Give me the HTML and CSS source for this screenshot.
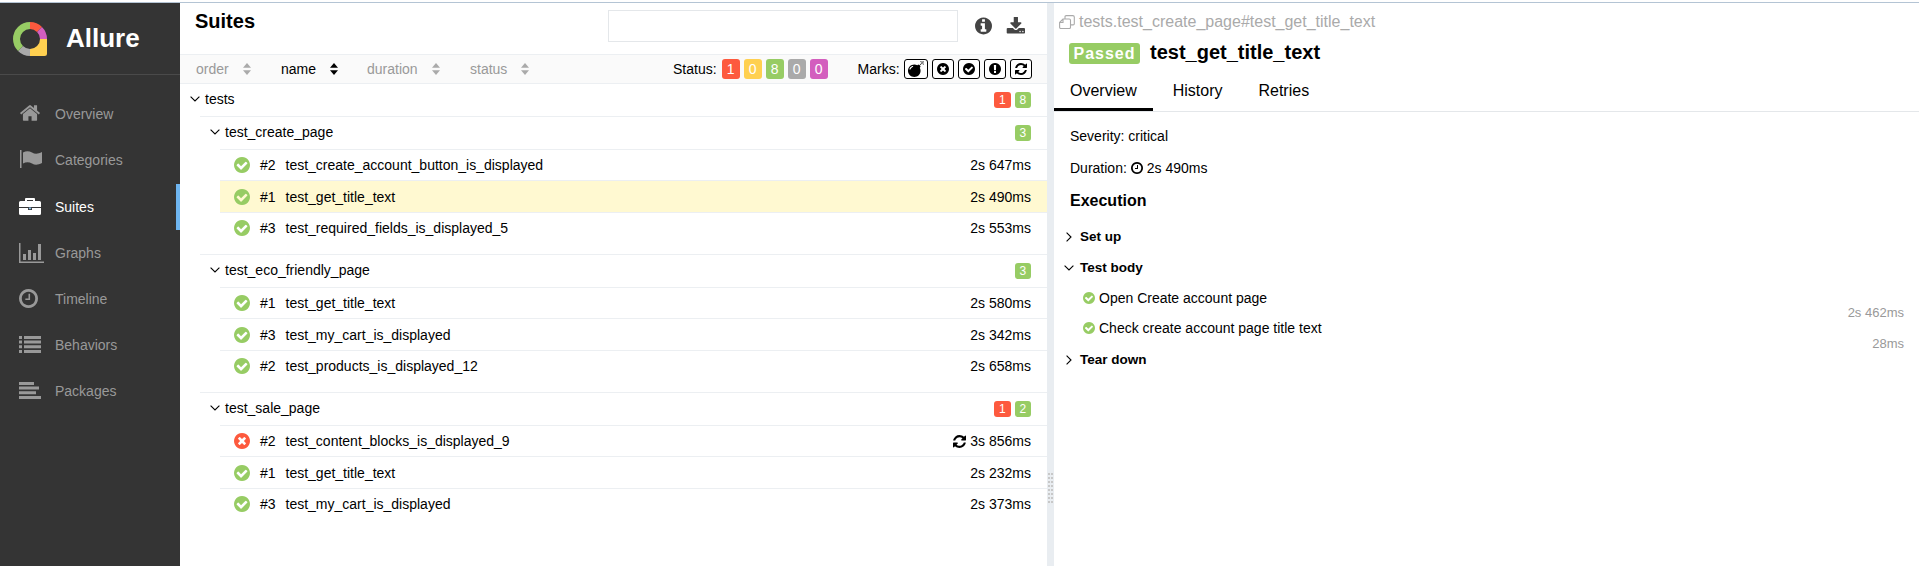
FILE: index.html
```html
<!DOCTYPE html>
<html lang="en">
<head>
  <meta charset="UTF-8" />
  <meta name="viewport" content="width=device-width, initial-scale=1.0" />
  <title>Allure Report</title>
  <link rel="stylesheet" href="styles.css">
</head>
<body>
  <svg class="sprites" aria-hidden="true">
    <symbol id="i-check" viewBox="128 128 1536 1536"><path d="M1412 734q0-28-18-46l-91-90q-19-19-45-19t-45 19l-408 407-226-226q-19-19-45-19t-45 19l-91 90q-18 18-18 46 0 27 18 45l362 362q19 19 45 19 27 0 46-19l543-543q18-18 18-45zm252 162q0 209-103 385.5t-279.5 279.5-385.5 103-385.5-103-279.5-279.5-103-385.5 103-385.5 279.5-279.5 385.5-103 385.5 103 279.5 279.5 103 385.5z"/></symbol>
    <symbol id="i-times" viewBox="128 128 1536 1536"><path d="M1277 1122q0-26-19-45l-181-181 181-181q19-19 19-45 0-27-19-46l-90-90q-19-19-46-19-26 0-45 19l-181 181-181-181q-19-19-45-19-27 0-46 19l-90 90q-19 19-19 46 0 26 19 45l181 181-181 181q-19 19-19 45 0 27 19 46l90 90q19 19 46 19 26 0 45-19l181-181 181 181q19 19 45 19 27 0 46-19l90-90q19-19 19-46zm387-226q0 209-103 385.5t-279.5 279.5-385.5 103-385.5-103-279.5-279.5-103-385.5 103-385.5 279.5-279.5 385.5-103 385.5 103 279.5 279.5 103 385.5z"/></symbol>
    <symbol id="i-info" viewBox="128 128 1536 1536"><path d="M1152 1376v-160q0-14-9-23t-23-9h-96v-512q0-14-9-23t-23-9h-320q-14 0-23 9t-9 23v160q0 14 9 23t23 9h96v320h-96q-14 0-23 9t-9 23v160q0 14 9 23t23 9h448q14 0 23-9t9-23zm-128-896v-160q0-14-9-23t-23-9h-192q-14 0-23 9t-9 23v160q0 14 9 23t23 9h192q14 0 23-9t9-23zm640 416q0 209-103 385.5t-279.5 279.5-385.5 103-385.5-103-279.5-279.5-103-385.5 103-385.5 279.5-279.5 385.5-103 385.5 103 279.5 279.5 103 385.5z"/></symbol>
    <symbol id="i-warn" viewBox="128 128 1536 1536"><path d="M896 128q209 0 385.5 103t279.5 279.5 103 385.5-103 385.5-279.5 279.5-385.5 103-385.5-103-279.5-279.5-103-385.5 103-385.5 279.5-279.5 385.5-103zm128 1247v-190q0-14-9-23.5t-22-9.5h-192q-13 0-23 10t-10 23v190q0 13 10 23t23 10h192q13 0 22-9.5t9-23.5zm-2-344l18-621q0-12-10-18-10-8-24-8h-220q-14 0-24 8-10 6-10 18l17 621q0 10 10 17.5t24 7.5h185q14 0 23.5-7.5t10.5-17.5z"/></symbol>
    <symbol id="i-clock" viewBox="128 128 1536 1536"><path d="M1024 544v448q0 14-9 23t-23 9h-320q-14 0-23-9t-9-23v-64q0-14 9-23t23-9h224v-352q0-14 9-23t23-9h64q14 0 23 9t9 23zm416 352q0-148-73-273t-198-198-273-73-273 73-198 198-73 273 73 273 198 198 273 73 273-73 198-198 73-273zm224 0q0 209-103 385.5t-279.5 279.5-385.5 103-385.5-103-279.5-279.5-103-385.5 103-385.5 279.5-279.5 385.5-103 385.5 103 279.5 279.5 103 385.5z"/></symbol>
    <symbol id="i-refresh" viewBox="128 128 1536 1536"><path d="M1639 1056q0 5-1 7-64 268-268 434.5t-478 166.5q-146 0-282.5-55t-243.5-157l-129 129q-19 19-45 19t-45-19-19-45v-448q0-26 19-45t45-19h448q26 0 45 19t19 45-19 45l-137 137q71 66 161 102t187 36q134 0 250-65t186-179q11-17 53-117 8-23 30-23h192q13 0 22.5 9.5t9.5 22.5zm25-800v448q0 26-19 45t-45 19h-448q-26 0-45-19t-19-45 19-45l138-138q-148-137-349-137-134 0-250 65t-186 179q-11 17-53 117-8 23-30 23h-199q-13 0-22.5-9.5t-9.5-22.5v-7q65-268 270-434.5t480-166.5q146 0 284 55.5t245 156.5l130-129q19-19 45-19t45 19 19 45z"/></symbol>
    <symbol id="i-bomb" viewBox="0 0 1792 1792"><path d="M571 589q-10-25-34-35t-49 0q-108 44-191 127t-127 191q-10 25 0 49t35 34q13 5 24 5 42 0 60-40 34-84 98.5-148.5t148.5-98.5q25-11 35-35t0-49zm942-356l46 46-244 243 68 68q19 19 19 45.5t-19 45.5l-64 64q89 161 89 343 0 143-55.5 273.5t-150 225-225 150-273.5 55.5-273.5-55.5-225-150-150-225-55.5-273.5 55.5-273.5 150-225 225-150 273.5-55.5q182 0 343 89l64-64q19-19 45.5-19t45.5 19l68 68zm8-56q-10 10-22 10-13 0-23-10l-91-90q-9-10-9-23t9-23q10-9 23-9t23 9l90 91q10 9 10 22.5t-10 22.5zm230 230q-11 9-23 9t-23-9l-90-91q-10-9-10-22.5t10-22.5q9-10 22.5-10t22.5 10l91 90q9 10 9 23t-9 23zm41-183q0 14-9 23t-23 9h-96q-14 0-23-9t-9-23 9-23 23-9h96q14 0 23 9t9 23zm-192-192v96q0 14-9 23t-23 9-23-9-9-23v-96q0-14 9-23t23-9 23 9 9 23zm151 55l-91 90q-10 10-22 10-13 0-23-10-10-9-10-22.5t10-22.5l90-91q10-9 23-9t23 9q9 10 9 23t-9 23z"/></symbol>
    <symbol id="i-download" viewBox="0 128 1728 1440"><path d="M1344 1344q0-26-19-45t-45-19-45 19-19 45 19 45 45 19 45-19 19-45zm256 0q0-26-19-45t-45-19-45 19-19 45 19 45 45 19 45-19 19-45zm128-224v320q0 40-28 68t-68 28h-1472q-40 0-68-28t-28-68v-320q0-40 28-68t68-28h465l135 136q58 56 136 56t136-56l136-136h464q40 0 68 28t28 68zm-325-569q17 41-14 70l-448 448q-18 19-45 19t-45-19l-448-448q-31-29-14-70 17-39 59-39h256v-448q0-26 19-45t45-19h256q26 0 45 19t19 45v448h256q42 0 59 39z"/></symbol>
    <symbol id="i-home" viewBox="0 0 1792 1792"><path d="M1472 992v480q0 26-19 45t-45 19h-384v-384h-256v384h-384q-26 0-45-19t-19-45v-480q0-1 .5-3t.5-3l575-474 575 474q1 2 1 6zm223-69l-62 74q-8 9-21 11h-3q-13 0-21-7l-692-577-692 577q-12 8-24 7-13-2-21-11l-62-74q-8-10-7-23.5t11-21.5l719-599q32-26 76-26t76 26l244 204v-195q0-14 9-23t23-9h192q14 0 23 9t9 23v408l219 182q10 8 11 21.5t-7 23.5z"/></symbol>
    <symbol id="i-flag" viewBox="0 0 22 18"><path d="M0 0h1.500v18H0z"/><path d="M3 2.500c3-1.800 6-1.800 9 0s6 1.600 10-.5v11c-4 2-7 2.300-10 .5s-6-1.800-9 0z"/></symbol>
    <symbol id="i-briefcase" viewBox="0 0 22 17"><path d="M7 0h8a1 1 0 0 1 1 1v2h-2V2H8v1H6V1a1 1 0 0 1 1-1z"/><path d="M1.500 3h19A1.500 1.500 0 0 1 22 4.500V9H0V4.500A1.500 1.500 0 0 1 1.500 3z"/><path d="M0 10h9v2h4v-2h9v5.500a1.500 1.500 0 0 1-1.500 1.500h-19A1.500 1.500 0 0 1 0 15.500z"/><path d="M9.800 9.500h2.400v1.700H9.800z" fill="#8fc0ea"/></symbol>
    <symbol id="i-graphs" viewBox="0 0 25 20"><path d="M0 0h1.500v18.500H25V20H0z"/><path d="M4 11h3v6H4zM9 7h3v10H9zM14 10h3v7h-3zM19 1h3v16h-3z"/></symbol>
    <symbol id="i-list" viewBox="0 0 22 17"><path d="M0 0h3v3H0zM5 0h17v3H5zM0 4.600h3v3H0zM5 4.600h17v3H5zM0 9.300h3v3H0zM5 9.300h17v3H5zM0 14h3v3H0zM5 14h17v3H5z"/></symbol>
    <symbol id="i-packages" viewBox="0 0 22 17"><path d="M0 0h15v3H0zM0 4.600h20v3H0zM0 9.300h17v3H0zM0 14h22v3H0z"/></symbol>
    <symbol id="i-sort" viewBox="0 0 10 12"><path d="M5 0l4 4.800H1zM5 12L1 7.200h8z"/></symbol>
    <symbol id="i-down" viewBox="0 0 10 6"><path d="M.6.600L5 5 9.400.600" fill="none" stroke="currentColor" stroke-width="1.100"/></symbol>
    <symbol id="i-right" viewBox="0 0 6 10"><path d="M.6.600L5 5 .6 9.400" fill="none" stroke="currentColor" stroke-width="1.100"/></symbol>
  </svg>

  <aside class="side-nav">
    <div class="brand">
      <svg class="brand-logo" viewBox="0 0 34 34">
        <g fill="none" stroke-width="7">
          <path d="M3.500 17A13.500 13.500 0 0 1 17 3.500" stroke="#97cc64"/>
          <path d="M17 3.500A13.500 13.500 0 0 1 26.500 7.500" stroke="#fd5a3e"/>
          <path d="M26.500 7.500A13.500 13.500 0 0 1 30.500 17" stroke="#d35ebe"/>
          <path d="M30.500 17A13.500 13.500 0 0 1 17 30.500" stroke="#ffd050"/>
          <path d="M17 30.500A13.500 13.500 0 0 1 7.500 26.500" stroke="#aaa"/>
          <path d="M7.500 26.500A13.500 13.500 0 0 1 3.500 17" stroke="#97cc64"/>
        </g>
        <path d="M27 17h7v14.500q0 2.500-2.500 2.500H17v-6.500h10z" fill="#ffd050"/>
      </svg>
      <span class="brand-name">Allure</span>
    </div>
    <nav class="nav-list">
      <a class="nav-item"><svg class="nav-icon nav-home"><use href="#i-home"/></svg>Overview</a>
      <a class="nav-item"><svg class="nav-icon nav-flag"><use href="#i-flag"/></svg>Categories</a>
      <a class="nav-item nav-item-active"><svg class="nav-icon nav-case"><use href="#i-briefcase"/></svg>Suites</a>
      <a class="nav-item"><svg class="nav-icon nav-graphs"><use href="#i-graphs"/></svg>Graphs</a>
      <a class="nav-item"><svg class="nav-icon nav-clock"><use href="#i-clock"/></svg>Timeline</a>
      <a class="nav-item"><svg class="nav-icon nav-bars"><use href="#i-list"/></svg>Behaviors</a>
      <a class="nav-item"><svg class="nav-icon nav-bars"><use href="#i-packages"/></svg>Packages</a>
    </nav>
  </aside>

  <main class="tree-pane">
    <header class="pane-head">
      <h2 class="pane-title">Suites</h2>
      <input class="search" type="text" />
      <svg class="head-icon head-info"><use href="#i-info"/></svg>
      <svg class="head-icon head-save"><use href="#i-download"/></svg>
    </header>

    <div class="toolbar">
      <span class="sort sort-order">order <svg class="sort-icon"><use href="#i-sort"/></svg></span>
      <span class="sort sort-name sort-active">name <svg class="sort-icon"><use href="#i-sort"/></svg></span>
      <span class="sort sort-duration">duration <svg class="sort-icon"><use href="#i-sort"/></svg></span>
      <span class="sort sort-status">status <svg class="sort-icon"><use href="#i-sort"/></svg></span>
      <span class="filter-label">Status:</span>
      <span class="pill red">1</span>
      <span class="pill yellow">0</span>
      <span class="pill green">8</span>
      <span class="pill grey">0</span>
      <span class="pill purple">0</span>
      <span class="filter-label marks-label">Marks:</span>
      <span class="mark mark-wide"><svg class="mark-bomb"><use href="#i-bomb"/></svg></span>
      <span class="mark"><svg><use href="#i-times"/></svg></span>
      <span class="mark"><svg><use href="#i-check"/></svg></span>
      <span class="mark"><svg><use href="#i-warn"/></svg></span>
      <span class="mark"><svg><use href="#i-refresh"/></svg></span>
    </div>

    <section class="tree">
      <div class="group-row group-root">
        <svg class="chev"><use href="#i-down"/></svg><span class="group-name">tests</span>
        <span class="count red">1</span><span class="count green">8</span>
      </div>

      <div class="suite">
        <div class="group-row">
          <svg class="chev"><use href="#i-down"/></svg><span class="group-name">test_create_page</span>
          <span class="count green">3</span>
        </div>
        <div class="case"><svg class="status ok"><use href="#i-check"/></svg><span class="num">#2</span><span class="case-name">test_create_account_button_is_displayed</span><span class="time">2s 647ms</span></div>
        <div class="case case-selected"><svg class="status ok"><use href="#i-check"/></svg><span class="num">#1</span><span class="case-name">test_get_title_text</span><span class="time">2s 490ms</span></div>
        <div class="case"><svg class="status ok"><use href="#i-check"/></svg><span class="num">#3</span><span class="case-name">test_required_fields_is_displayed_5</span><span class="time">2s 553ms</span></div>
      </div>

      <div class="suite">
        <div class="group-row">
          <svg class="chev"><use href="#i-down"/></svg><span class="group-name">test_eco_friendly_page</span>
          <span class="count green">3</span>
        </div>
        <div class="case"><svg class="status ok"><use href="#i-check"/></svg><span class="num">#1</span><span class="case-name">test_get_title_text</span><span class="time">2s 580ms</span></div>
        <div class="case"><svg class="status ok"><use href="#i-check"/></svg><span class="num">#3</span><span class="case-name">test_my_cart_is_displayed</span><span class="time">2s 342ms</span></div>
        <div class="case"><svg class="status ok"><use href="#i-check"/></svg><span class="num">#2</span><span class="case-name">test_products_is_displayed_12</span><span class="time">2s 658ms</span></div>
      </div>

      <div class="suite">
        <div class="group-row">
          <svg class="chev"><use href="#i-down"/></svg><span class="group-name">test_sale_page</span>
          <span class="count red">1</span><span class="count green">2</span>
        </div>
        <div class="case"><svg class="status bad"><use href="#i-times"/></svg><span class="num">#2</span><span class="case-name">test_content_blocks_is_displayed_9</span><svg class="retry"><use href="#i-refresh"/></svg><span class="time">3s 856ms</span></div>
        <div class="case"><svg class="status ok"><use href="#i-check"/></svg><span class="num">#1</span><span class="case-name">test_get_title_text</span><span class="time">2s 232ms</span></div>
        <div class="case"><svg class="status ok"><use href="#i-check"/></svg><span class="num">#3</span><span class="case-name">test_my_cart_is_displayed</span><span class="time">2s 373ms</span></div>
      </div>
    </section>
  </main>

  <div class="gutter"><span class="gutter-dots"></span></div>

  <section class="detail-pane">
    <div class="crumb">
      <svg class="crumb-icon" viewBox="0 0 16 14"><path d="M6 4V1.800Q6 .6 7.200 .6h6.600q1.500 0 1.500 1.500v6.600q0 1.200-1.200 1.200H11.500M.6 7.500L4 4h6.300q1.200 0 1.200 1.200v7.100q0 1.200-1.200 1.200H1.800q-1.200 0-1.200-1.200zM4 4v3.500H.6" fill="none" stroke="#aaa" stroke-width="1.100"/></svg>
      tests.test_create_page#test_get_title_text
    </div>
    <div class="title-row">
      <span class="passed">Passed</span>
      <h2 class="case-title">test_get_title_text</h2>
    </div>
    <div class="tabs">
      <a class="tab tab-active">Overview</a>
      <a class="tab">History</a>
      <a class="tab">Retries</a>
    </div>
    <p class="meta meta-severity">Severity: critical</p>
    <p class="meta">Duration: <svg class="meta-clock"><use href="#i-clock"/></svg> 2s 490ms</p>
    <h3 class="exec-title">Execution</h3>
    <div class="stage stage-first"><svg class="stage-right"><use href="#i-right"/></svg>Set up</div>
    <div class="stage"><svg class="stage-down"><use href="#i-down"/></svg>Test body</div>
    <div class="step"><svg class="step-icon"><use href="#i-check"/></svg><span class="step-name">Open Create account page</span><span class="step-time">2s 462ms</span></div>
    <div class="step"><svg class="step-icon"><use href="#i-check"/></svg><span class="step-name">Check create account page title text</span><span class="step-time">28ms</span></div>
    <div class="stage"><svg class="stage-right"><use href="#i-right"/></svg>Tear down</div>
  </section>
</body>
</html>
```

FILE: styles.css
```css
html {
  background: #fff;
  overflow: hidden;
}
body {
  margin: 2px 0 0;
  display: flex;
  height: 564px;
  overflow: hidden;
  box-sizing: border-box;
  border-top: 1px solid #b4c4d4;
  font-family: "Liberation Sans", Arial, sans-serif;
  font-size: 14px;
  color: #000;
  background: #fff;
}
svg {
  fill: currentColor;
}
.sprites {
  display: none;
}

/* side nav */
.side-nav {
  width: 180px;
  flex: none;
  background: #343434;
  color: #fff;
}
.brand {
  display: flex;
  align-items: center;
  height: 72px;
  box-sizing: border-box;
  padding-left: 13px;
  border-bottom: 1px solid #4a4a4a;
}
.brand-logo {
  width: 34px;
  height: 34px;
}
.brand-name {
  margin-left: 19px;
  font-size: 26px;
  font-weight: bold;
}
.nav-list {
  padding-top: 16.200px;
}
.nav-item {
  position: relative;
  display: flex;
  align-items: center;
  height: 46.200px;
  padding-left: 55px;
  color: #999;
}
.nav-item-active {
  color: #fff;
}
.nav-item-active::after {
  content: "";
  position: absolute;
  top: 0;
  right: 0;
  bottom: 0;
  width: 4px;
  background: #6eb5f0;
}
.nav-icon {
  position: absolute;
  left: 19px;
  top: 50%;
  width: 22px;
  height: 17px;
  margin-top: -9px;
}
.nav-home {
  left: 18.500px;
  margin-top: -12px;
  height: 22px;
}
.nav-flag {
  left: 20px;
  height: 18px;
  margin-top: -10px;
}
.nav-graphs {
  width: 25px;
  height: 20px;
  margin-top: -10px;
}
.nav-clock {
  width: 19px;
  height: 19px;
  margin-top: -10px;
}

/* suites tree */
.tree-pane {
  width: 867px;
  flex: none;
}
.pane-head {
  display: flex;
  height: 51px;
  box-sizing: border-box;
}
.pane-title {
  margin: 8px 0 0 15px;
  font-size: 20px;
  line-height: 21px;
  width: 413px;
}
.search {
  width: 350px;
  height: 32px;
  box-sizing: border-box;
  margin-top: 7px;
  border: 1px solid #e4e7ea;
  outline: none;
}
.head-icon {
  color: #444;
  height: 18px;
  margin-top: 14px;
}
.head-info {
  width: 17px;
  margin-left: 17px;
}
.head-save {
  width: 19px;
  margin-left: 14px;
}
.toolbar {
  display: flex;
  align-items: center;
  height: 30px;
  box-sizing: border-box;
  padding-bottom: 1px;
  border-top: 1px solid #eceff2;
  border-bottom: 1px solid #eceff2;
  background: #fafafa;
}
.sort {
  display: flex;
  align-items: center;
  color: #999;
}
.sort-icon {
  width: 10px;
  height: 12px;
  margin-left: 13px;
  color: #aaa;
}
.sort-order {
  margin-left: 16px;
  width: 85px;
}
.sort-name {
  width: 86px;
}
.sort-duration {
  width: 103px;
}
.sort-active, .sort-active .sort-icon {
  color: #000;
}
.sort-status {
  width: 203px;
}
.filter-label {
  margin-right: 5px;
}
.marks-label {
  margin-left: 26px;
  margin-right: 4px;
}
.pill {
  width: 18px;
  height: 20px;
  line-height: 20px;
  margin-right: 4px;
  border-radius: 3px;
  text-align: center;
  color: #fff;
}
.red { background: #fd5a3e; }
.yellow { background: #ffd050; }
.green { background: #97cc64; }
.grey { background: #aaa; }
.purple { background: #d35ebe; }
.mark {
  display: flex;
  align-items: center;
  justify-content: center;
  width: 22px;
  height: 20px;
  box-sizing: border-box;
  margin-right: 4px;
  border: 1px solid #000;
  border-radius: 3px;
  background: #fff;
}
.mark-wide {
  width: 24px;
}
.mark svg {
  width: 12px;
  height: 12px;
}
.mark .mark-bomb {
  width: 16px;
  height: 16px;
}
.tree {
  padding-left: 10px;
}
.group-row {
  display: flex;
  align-items: center;
  height: 30px;
  padding: 0 16px 2px 10px;
}
.group-root {
  padding-left: 0;
}
.chev {
  width: 10px;
  height: 6px;
  margin-right: 5px;
  flex: none;
  color: #000;
}
.group-name {
  flex: 1;
}
.count {
  width: 16.500px;
  height: 16px;
  line-height: 16px;
  margin: 2px 0 0 4px;
  border-radius: 3px;
  text-align: center;
  font-size: 12px;
  color: #fff;
}
.suite {
  margin-left: 10px;
  padding-bottom: 10.800px;
  border-top: 1px solid #eceff2;
}
.case {
  display: flex;
  align-items: center;
  height: 30.400px;
  margin-left: 20px;
  padding: 0 16px 0 14px;
  border-top: 1px solid #eceff2;
}
.case-selected {
  background: #fff9d1;
}
.status {
  width: 16px;
  height: 16px;
  margin-right: 10px;
  flex: none;
}
.ok { color: #97cc64; }
.bad { color: #fd5a3e; }
.num {
  width: 25.500px;
}
.case-name {
  flex: 1;
}
.retry {
  width: 13px;
  height: 13px;
  margin-right: 4px;
}

/* splitter */
.gutter {
  width: 7px;
  flex: none;
  display: flex;
  flex-direction: column;
  justify-content: flex-end;
  align-items: center;
  padding-bottom: 63px;
  box-sizing: border-box;
  background: #e9edf1;
}
.gutter-dots {
  width: 5px;
  height: 30px;
  background-image:
    linear-gradient(90deg, transparent 2px, #e9edf1 2px, #e9edf1 3px, transparent 3px),
    linear-gradient(#c8c8c8 2px, transparent 2px);
  background-size: 5px 4px;
}

/* test details */
.detail-pane {
  flex: 1;
  min-width: 0;
}
.crumb {
  display: flex;
  align-items: center;
  gap: 4px;
  height: 29px;
  padding: 8px 0 0 5px;
  box-sizing: border-box;
  font-size: 16px;
  color: #aaa;
}
.crumb-icon {
  width: 16px;
  height: 14px;
}
.title-row {
  display: flex;
  align-items: center;
  height: 43px;
  padding-left: 15px;
}
.passed {
  width: 71px;
  height: 21px;
  line-height: 21px;
  margin: 0 10px 0 0;
  border-radius: 3px;
  background: #97cc64;
  color: #fff;
  text-align: center;
  font-size: 16px;
  font-weight: bold;
  letter-spacing: 1px;
}
.case-title {
  margin: 0 0 3px;
  font-size: 20px;
}
.tabs {
  display: flex;
  height: 37px;
  box-sizing: border-box;
  border-bottom: 1px solid #e4e7ea;
}
.tab {
  display: flex;
  align-items: center;
  height: 36px;
  box-sizing: border-box;
  padding: 0 16px 5px;
  margin-right: 4px;
  font-size: 16px;
}
.tab-active {
  padding-bottom: 2px;
  border-bottom: 3px solid #000;
}
.meta {
  display: flex;
  align-items: center;
  gap: 4px;
  margin: 0 0 0 16px;
  height: 32px;
}
.meta-severity {
  margin-top: 8px;
}
.meta-clock {
  width: 12px;
  height: 12px;
}
.exec-title {
  margin: 0 0 0 16px;
  padding-top: 4px;
  font-size: 16px;
  line-height: 26px;
}
.stage {
  position: relative;
  display: flex;
  align-items: center;
  height: 31px;
  padding-left: 26px;
  font-size: 13.500px;
  font-weight: bold;
}
.stage-first {
  margin-top: 6.500px;
}
.stage-right {
  position: absolute;
  left: 12px;
  top: 11px;
  width: 6px;
  height: 10px;
}
.stage-down {
  position: absolute;
  left: 10px;
  top: 13px;
  width: 10px;
  height: 6px;
}
.step {
  position: relative;
  display: flex;
  align-items: center;
  height: 30.500px;
  padding-left: 29px;
}
.step-icon {
  width: 12px;
  height: 12px;
  margin-right: 4px;
  color: #97cc64;
}
.step-time {
  position: absolute;
  right: 15px;
  top: 22.500px;
  font-size: 13px;
  line-height: 16px;
  color: #999;
}
```
